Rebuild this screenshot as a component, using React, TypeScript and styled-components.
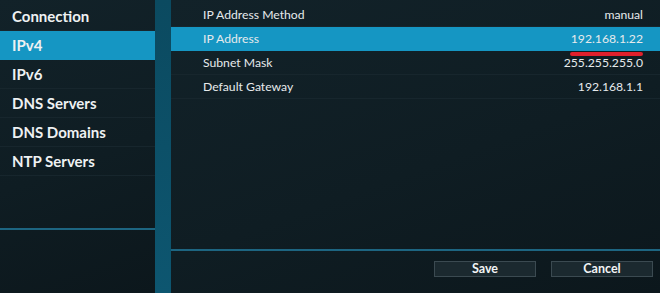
import styled, { createGlobalStyle } from "styled-components";

const GlobalStyle = createGlobalStyle`
  html, body {
    margin: 0;
    padding: 0;
    background: #0b4a60;
  }
  * {
    box-sizing: border-box;
  }
`;

const Screen = styled.div`
  width: 660px;
  height: 293px;
  display: grid;
  grid-template-columns: 155px 1fr;
  column-gap: 16px;
  background: linear-gradient(180deg, #0b4a60 0%, #0d5670 100%);
  font-family: Lato, "Open Sans", sans-serif;
  overflow: hidden;
`;

const Panel = styled.div<{ $top: number }>`
  display: flex;
  flex-direction: column;
  background: linear-gradient(160deg, #122229 0%, #0f1d23 55%, #0c171c 100%);
  padding-top: ${(p) => p.$top}px;
`;

const NavItem = styled.div<{ $active?: boolean }>`
  height: 29px;
  display: flex;
  align-items: center;
  padding-left: 12px;
  font-size: 15px;
  font-weight: 700;
  color: #eef1f2;
  background: ${(p) => (p.$active ? "#1596c3" : "transparent")};
  border-bottom: 1px solid ${(p) => (p.$active ? "#1596c3" : "#17262d")};
`;

const Spacer = styled.div`
  flex: 1;
`;

const Divider = styled.div`
  height: 2px;
  background: #1d6581;
`;

const Bottom = styled.div<{ $h: number }>`
  height: ${(p) => p.$h}px;
`;

const Row = styled.div<{ $active?: boolean }>`
  height: 24px;
  display: flex;
  align-items: center;
  justify-content: space-between;
  padding: 0 17px 0 32px;
  font-size: 12.2px;
  color: #e6eaec;
  background: ${(p) => (p.$active ? "#1596c3" : "transparent")};
  border-bottom: 1px solid ${(p) => (p.$active ? "#1596c3" : "#17262d")};
`;

const Value = styled.span<{ $marked?: boolean }>`
  position: relative;
  &::after {
    content: "";
    display: ${(p) => (p.$marked ? "block" : "none")};
    position: absolute;
    left: -1px;
    right: 0;
    bottom: -10px;
    height: 4px;
    border-radius: 2px;
    background: #e0202c;
  }
`;

const Footer = styled.div`
  height: 42px;
  display: flex;
  justify-content: flex-end;
  align-items: flex-start;
  gap: 15px;
  padding: 10px 7px 0 0;
`;

const Button = styled.button`
  width: 102px;
  height: 16px;
  padding: 0;
  background: #1b292f;
  border: 1px solid #3b4a51;
  color: #f2f4f5;
  font-family: Lato, "Open Sans", sans-serif;
  font-size: 12.5px;
  font-weight: 700;
  line-height: 14px;
`;

const nav = ["Connection", "IPv4", "IPv6", "DNS Servers", "DNS Domains", "NTP Servers"];

const rows = [
  { label: "IP Address Method", value: "manual" },
  { label: "IP Address", value: "192.168.1.22", active: true },
  { label: "Subnet Mask", value: "255.255.255.0" },
  { label: "Default Gateway", value: "192.168.1.1" },
];

const App = () => {
  return (
    <>
      <GlobalStyle />
      <Screen>
        <Panel $top={2}>
          {nav.map((n) => (
            <NavItem key={n} $active={n === "IPv4"}>
              {n}
            </NavItem>
          ))}
          <Spacer />
          <Divider />
          <Bottom $h={63} />
        </Panel>
        <Panel $top={3}>
          {rows.map((r) => (
            <Row key={r.label} $active={r.active}>
              <span>{r.label}</span>
              <Value $marked={r.active}>{r.value}</Value>
            </Row>
          ))}
          <Spacer />
          <Divider />
          <Footer>
            <Button>Save</Button>
            <Button>Cancel</Button>
          </Footer>
        </Panel>
      </Screen>
    </>
  );
};

export default App;
